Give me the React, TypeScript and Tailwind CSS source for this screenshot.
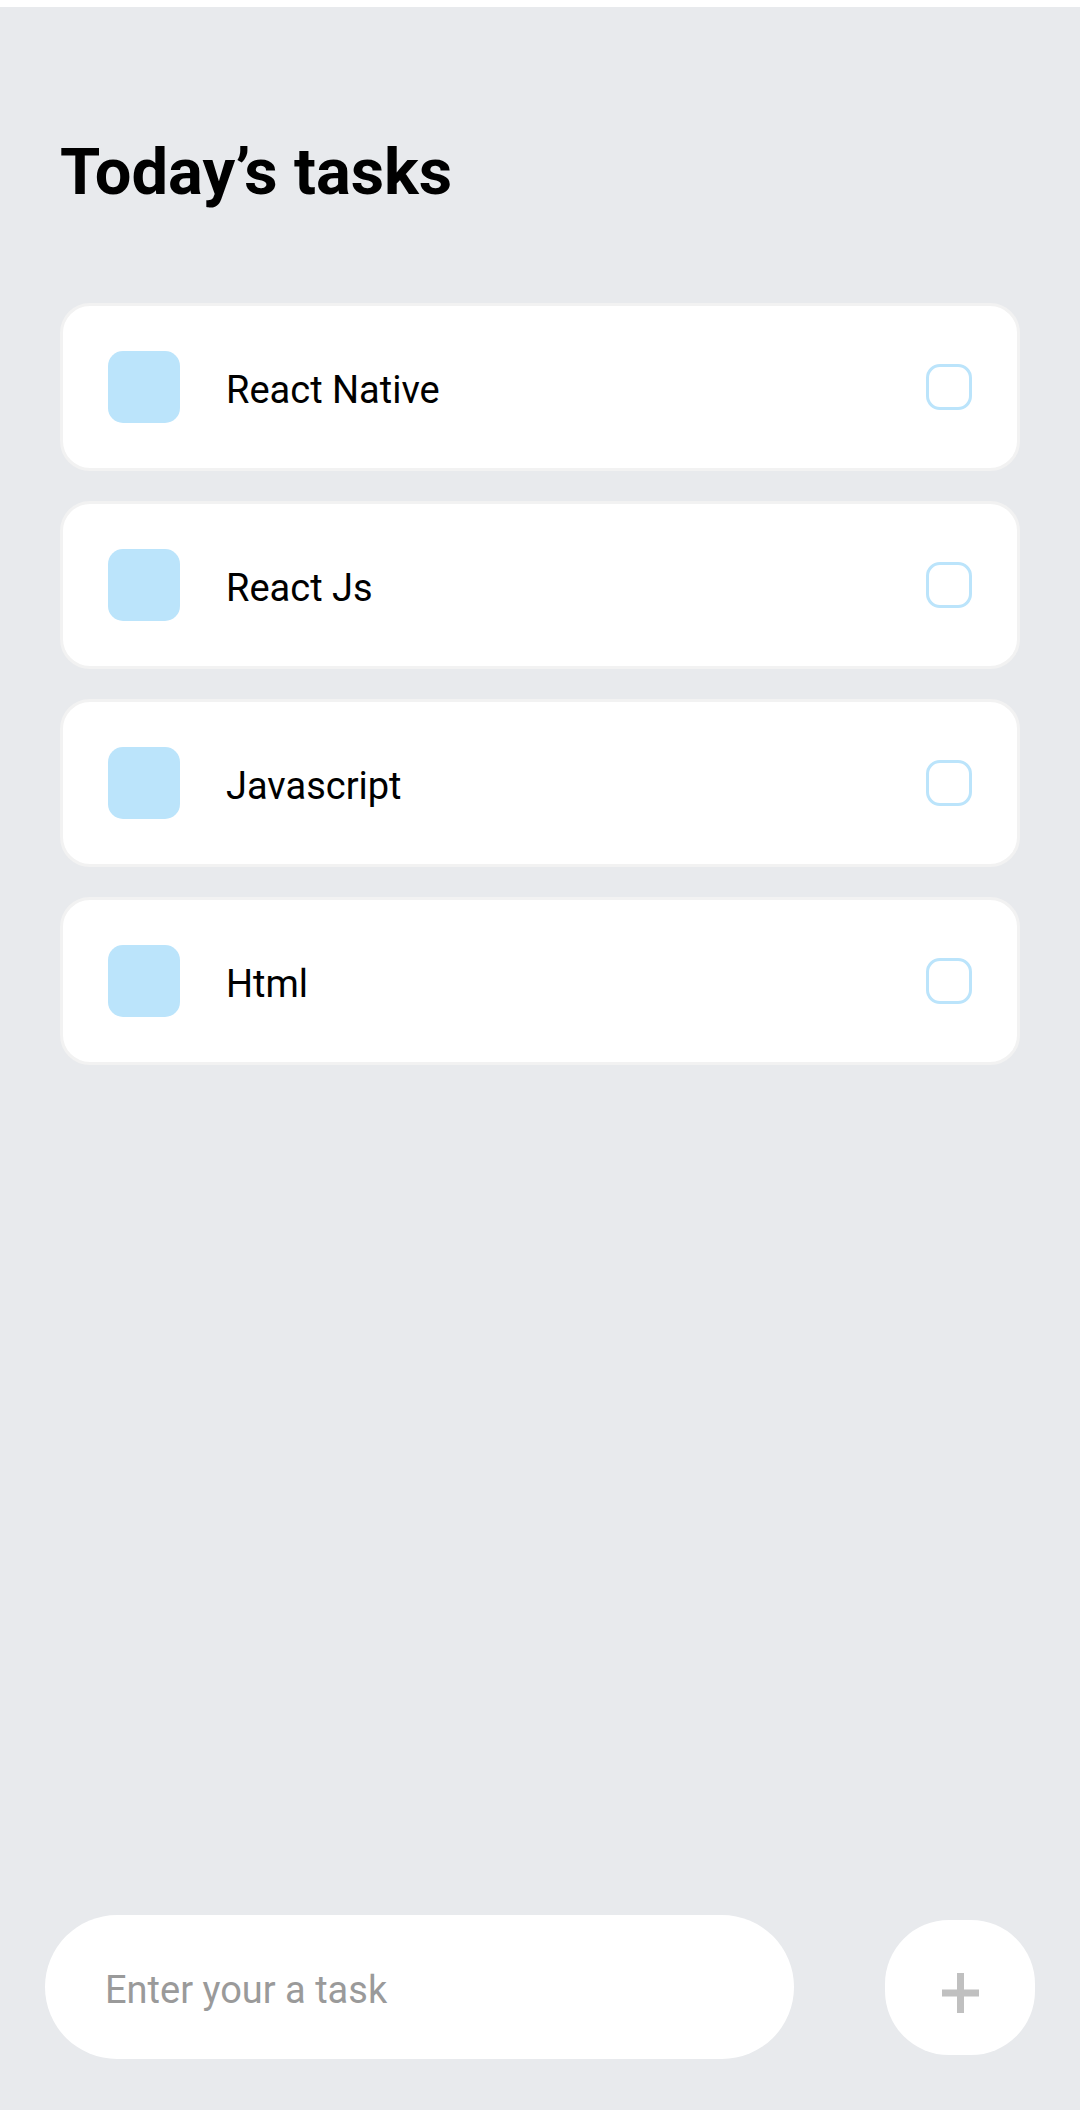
import React from "react";

type Task = {
  id: number;
  title: string;
};

const tasks: Task[] = [
  { id: 1, title: "React Native" },
  { id: 2, title: "React Js" },
  { id: 3, title: "Javascript" },
  { id: 4, title: "Html" },
];

function TaskItem({ task }: { task: Task }) {
  return (
    <div className="flex h-[168px] items-center rounded-[30px] border-[3px] border-[#f2f2f2] bg-white px-[45px]">
      <div className="h-[72px] w-[72px] shrink-0 rounded-[15px] bg-[#bbe4fb]" />
      <p className="ml-[46px] flex-1 pt-[5px] text-[38px] leading-none text-black">
        {task.title}
      </p>
      <div className="h-[46px] w-[46px] shrink-0 rounded-[14px] border-[3px] border-[#bbe4fb]" />
    </div>
  );
}

export default function App() {
  return (
    <div
      className="flex h-[2110px] w-[1080px] flex-col bg-[#e8eaed]"
      style={{ fontFamily: "Roboto, 'Noto Sans', sans-serif" }}
    >
      {/* status bar strip */}
      <div className="h-[7px] bg-white" />

      <div className="flex-1 px-[60px]">
        <h1 className="mt-[133px] text-[65px] font-bold leading-none text-black">
          Today’s tasks
        </h1>

        <div className="mt-[98px] flex flex-col gap-[30px]">
          {tasks.map((task) => (
            <TaskItem key={task.id} task={task} />
          ))}
        </div>
      </div>

      {/* new task input */}
      <div className="flex items-center justify-between pb-[51px] pl-[45px] pr-[45px]">
        <div className="flex h-[144px] w-[749px] items-center rounded-full bg-white pl-[60px]">
          <span className="pt-[5px] text-[38px] leading-none text-[#9a9a9a]">
            Enter your a task
          </span>
        </div>
        <button className="flex h-[135px] w-[150px] items-center justify-center rounded-[64px] bg-white">
          <svg className="mt-[11px]" width="37" height="40" viewBox="0 0 37 40">
            <rect x="0" y="16.5" width="37" height="7" fill="#c0c0c0" />
            <rect x="15" y="0" width="7" height="40" fill="#c0c0c0" />
          </svg>
        </button>
      </div>
    </div>
  );
}
